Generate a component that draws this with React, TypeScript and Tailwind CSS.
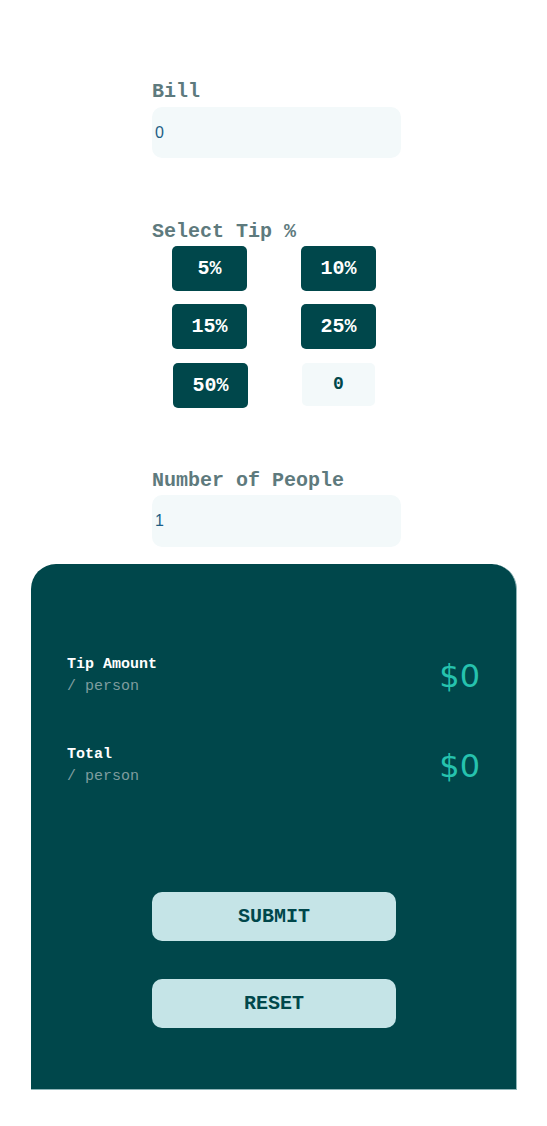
export default function App() {
  // Tip options shown as buttons
  const tips = ['5%', '10%', '15%', '25%', '50%'];

  const results = [
    { label: 'Tip Amount', value: '$0' },
    { label: 'Total', value: '$0' },
  ];

  return (
    <div className="min-h-[1126px] w-full bg-white" style={{ fontFamily: '"Liberation Mono", "Courier New", monospace' }}>
      <div className="pl-[152px] pt-[80px]">
        {/* Bill */}
        <label className="block text-[20px] font-bold leading-6 text-[#5e7a7d]">Bill</label>
        <div className="mt-[3px] flex h-[51px] w-[249px] items-center rounded-[10px] bg-[#f3f9fa] pl-[3px]">
          <span className="text-[16px] text-[#1d5f86]" style={{ fontFamily: '"Liberation Sans", Arial, sans-serif' }}>0</span>
        </div>

        {/* Select Tip */}
        <label className="mt-[62px] block text-[20px] font-bold leading-6 text-[#5e7a7d]">Select Tip %</label>
        <div className="ml-[20px] mt-[2px] grid w-[204px] grid-cols-[75px_75px] gap-x-[54px]">
          {tips.map((tip, i) => (
            <button
              key={tip}
              className={`flex h-[45px] w-[75px] items-center justify-center rounded-[5px] bg-[#00474b] text-[20px] font-bold text-white ${i >= 2 ? 'mt-[13px]' : ''} ${i === 4 ? 'ml-[1px] mt-[14px]' : ''}`}
            >
              {tip}
            </button>
          ))}
          <div className="ml-[1px] mt-[14px] flex h-[43px] w-[73px] items-center justify-center rounded-[5px] bg-[#f3f9fa] text-[18px] font-bold text-[#00474b]">
            0
          </div>
        </div>

        {/* Number of People */}
        <label className="mt-[61px] block text-[20px] font-bold leading-6 text-[#5e7a7d]">Number of People</label>
        <div className="mt-[2px] flex h-[52px] w-[249px] items-center rounded-[10px] bg-[#f3f9fa] pl-[3px]">
          <span className="text-[16px] text-[#1d5f86]" style={{ fontFamily: '"Liberation Sans", Arial, sans-serif' }}>1</span>
        </div>
      </div>

      {/* Results panel */}
      <div className="ml-[31px] mt-[17px] w-[486px] rounded-t-[25px] border-b border-r border-[#8fb5b8] bg-[#00474b] pb-[61px] pl-[36px] pr-[36px] pt-[91px]">
        <div className="flex flex-col gap-[48px]">
          {results.map((r) => (
            <div key={r.label} className="flex items-center justify-between">
              <div>
                <div className="text-[15px] font-bold leading-[20px] text-white">{r.label}</div>
                <div className="mt-[2px] text-[15px] leading-[20px] text-[#7f9d9f]">/ person</div>
              </div>
              <div
                className="text-[32px] leading-[36px] text-[#26c2ae]"
                style={{ fontFamily: '"DejaVu Sans", sans-serif' }}
              >
                {r.value}
              </div>
            </div>
          ))}
        </div>

        <div className="ml-[85px] mt-[105px] flex flex-col gap-[38px]">
          <button className="h-[49px] w-[244px] rounded-[10px] bg-[#c5e4e7] text-[20px] font-bold text-[#00474b]">SUBMIT</button>
          <button className="h-[49px] w-[244px] rounded-[10px] bg-[#c5e4e7] text-[20px] font-bold text-[#00474b]">RESET</button>
        </div>
      </div>
    </div>
  );
}
